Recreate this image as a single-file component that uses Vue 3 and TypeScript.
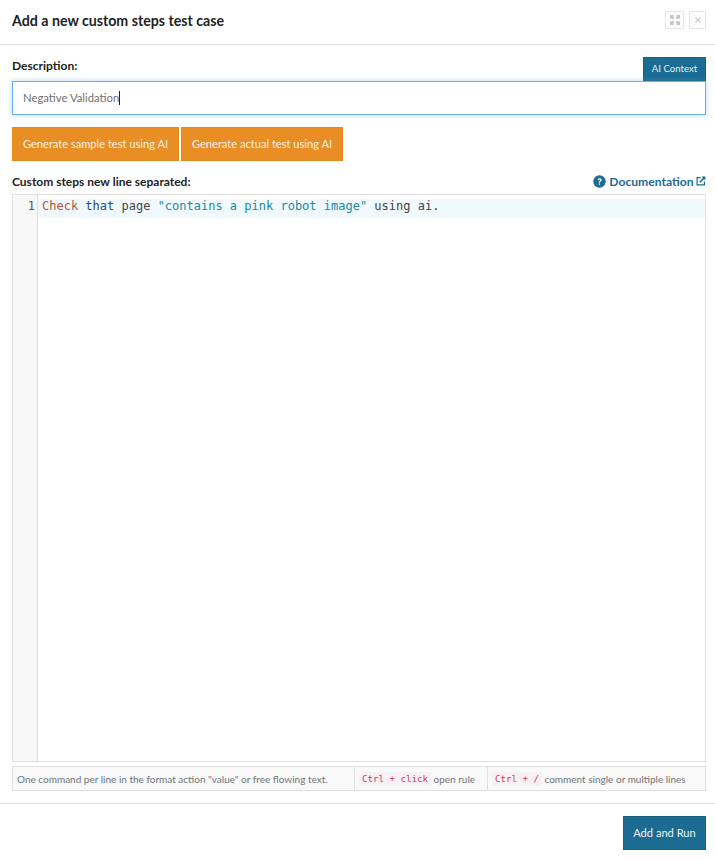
<script setup lang="ts">
const description = 'Negative Validation'
</script>

<template>
  <div class="modal">
    <header class="head">
      <h1 class="title">Add a new custom steps test case</h1>
      <div class="win-btns">
        <button class="win-btn win-expand" aria-label="Expand">
          <svg width="10" height="10" viewBox="0 0 10 10" fill="#c4c4c4">
            <path d="M0 0h4L2.9 1.1 4.4 2.6 2.6 4.4 1.1 2.9 0 4zM10 0v4L8.9 2.9 7.4 4.4 5.6 2.6 7.1 1.1 6 0zM0 10V6l1.1 1.1 1.5-1.5 1.8 1.8-1.5 1.5L4 10zM10 10H6l1.1-1.1-1.5-1.5 1.8-1.8 1.5 1.5L10 6z" />
          </svg>
        </button>
        <button class="win-btn win-close" aria-label="Close">
          <svg width="8" height="8" viewBox="0 0 8 8" stroke="#cfcfcf" stroke-width="1.3" fill="none">
            <path d="M1.5 1.5l5 5M6.5 1.5l-5 5" />
          </svg>
        </button>
      </div>
    </header>

    <main class="body">
      <div class="desc-row">
        <label class="label desc-label">Description:</label>
        <button class="ctx-btn">AI Context</button>
      </div>
      <div class="input">
        <span>{{ description }}</span><i class="caret"></i>
      </div>

      <div class="actions">
        <button class="gen gen-a">Generate sample test using AI</button>
        <button class="gen gen-b">Generate actual test using AI</button>
      </div>

      <div class="steps-row">
        <label class="label">Custom steps new line separated:</label>
        <a class="doc">
          <svg class="q" width="13" height="13" viewBox="0 0 13 13">
            <circle cx="6.5" cy="6.5" r="6.2" fill="#1b6b92" />
            <path d="M4.5 5.1c.1-1.2 1-1.8 2.1-1.8 1.2 0 2 .7 2 1.7 0 1.5-1.7 1.5-1.7 2.7H5.7c0-1.8 1.5-1.8 1.5-2.6 0-.4-.3-.7-.7-.7-.5 0-.8.3-.9.8z" fill="#fff" />
            <rect x="5.7" y="8.4" width="1.3" height="1.4" fill="#fff" />
          </svg>
          <span>Documentation</span>
          <svg class="ext" width="10" height="10" viewBox="0 0 10 10" fill="none" stroke="#1b6b92" stroke-width="1.2">
            <path d="M4.5 1.6H1.1v7.3h7.3V5.5" />
            <path d="M3.8 6.2L8.6 1.4" stroke-width="1.5" />
            <path d="M5.6.6h3.8v3.8z" fill="#1b6b92" stroke="none" />
          </svg>
        </a>
      </div>

      <div class="editor">
        <div class="gutter"><span>1</span></div>
        <div class="code">
          <div class="line"><span class="k-action">Check</span> <span class="k-word">that</span> page <span class="k-str">"contains a pink robot image"</span> using ai.</div>
        </div>
      </div>

      <div class="hints">
        <div class="hint hint-a">One command per line in the format action "value" or free flowing text.</div>
        <div class="hint hint-b"><code>Ctrl + click</code> open rule</div>
        <div class="hint hint-c"><code>Ctrl + /</code> comment single or multiple lines</div>
      </div>
    </main>

    <footer class="foot">
      <button class="run">Add and Run</button>
    </footer>
  </div>
</template>

<style>
html, body { margin: 0; background: #fff; }
</style>

<style scoped>
.modal {
  width: 715px;
  height: 859px;
  display: flex;
  flex-direction: column;
  font-family: Lato, "Liberation Sans", sans-serif;
  color: #222;
  background: #fff;
  box-sizing: border-box;
}
.head {
  height: 44px;
  flex: none;
  display: flex;
  align-items: flex-start;
  justify-content: space-between;
  padding: 0 9px 0 12px;
  border-bottom: 1px solid #e3e3e3;
}
.title {
  margin: 12px 0 0;
  font-size: 14.2px;
  line-height: 18px;
  font-weight: 700;
  color: #222;
}
.win-btns {
  display: flex;
  gap: 5px;
  margin-top: 11px;
}
.win-btn {
  height: 18px;
  padding: 0;
  border: 1px solid #e6e6e6;
  border-radius: 1px;
  background: #fbfbfb;
  display: flex;
  align-items: center;
  justify-content: center;
}
.win-expand { width: 19px; }
.win-close { width: 17px; }
.body {
  flex: none;
  padding: 12px 9px 0 12px;
  display: flex;
  flex-direction: column;
}
.label {
  font-size: 12px;
  line-height: 16px;
  font-weight: 700;
  color: #222;
}
.desc-row {
  display: flex;
  justify-content: space-between;
  align-items: flex-start;
  height: 24px;
}
.desc-label { margin-top: 1px; }
.ctx-btn {
  width: 63px;
  height: 24px;
  padding: 0 0 1px;
  border: 1px solid #176080;
  background: #1b6b92;
  color: #e4eef3;
  font: 400 9.6px/1 Lato, sans-serif;
}
.input {
  height: 34px;
  box-sizing: border-box;
  border: 1px solid #66afe9;
  box-shadow: 0 0 6px rgba(102, 175, 233, 0.45);
  padding: 0 10px 1px;
  display: flex;
  align-items: center;
  font-size: 11.3px;
  color: #707070;
  background: #fff;
}
.caret {
  display: inline-block;
  width: 1px;
  height: 14px;
  background: #222;
}
.actions {
  display: flex;
  gap: 2px;
  margin-top: 12px;
}
.gen {
  height: 34px;
  padding: 0 0 1px;
  border: 1px solid #e08a1e;
  background: #e98d25;
  color: #fdf3e6;
  font: 400 11.1px/1 Lato, sans-serif;
}
.gen-a { width: 167px; }
.gen-b { width: 162px; }
.steps-row {
  display: flex;
  justify-content: space-between;
  align-items: flex-start;
  margin-top: 13px;
  height: 20px;
}
.doc {
  display: flex;
  align-items: center;
  color: #1b6b92;
  font-size: 12.1px;
  line-height: 16px;
  font-weight: 700;
}
.q { margin-right: 3px; margin-top: -1px; }
.ext { margin-left: 2.5px; margin-top: -2px; }
.editor {
  height: 568px;
  box-sizing: border-box;
  border: 1px solid #e0e0e0;
  display: flex;
}
.gutter {
  width: 24px;
  flex: none;
  background: #f8f8f8;
  border-right: 1px solid #dedede;
  font: 12px/15px "DejaVu Sans Mono", monospace;
  color: #555;
  text-align: right;
  padding-top: 4px;
}
.gutter span { margin-right: 2px; }
.code {
  flex: 1;
  padding-top: 4px;
}
.line {
  height: 19px;
  padding: 0 0 0 4px;
  font: 12px/15px "DejaVu Sans Mono", monospace;
  background: #f0f9fe;
  color: #444;
  white-space: pre;
}
.k-action { color: #b5533a; }
.k-word { color: #24506f; }
.k-str { color: #22899a; }
.hints {
  margin-top: 4px;
  height: 25px;
  box-sizing: border-box;
  border: 1px solid #e0e0e0;
  background: #f9f9f9;
  display: flex;
  font-size: 10px;
  color: #6f7478;
}
.hint {
  display: flex;
  align-items: center;
  padding-left: 4px;
  box-sizing: border-box;
  white-space: pre;
}
.hint-a { width: 342px; border-right: 1px solid #e0e0e0; }
.hint-b { width: 133px; border-right: 1px solid #e0e0e0; }
.hint-c { flex: 1; }
code {
  font: 9.15px/14px "DejaVu Sans Mono", monospace;
  color: #d6336c;
  background: #f8f1f4;
  padding: 0 3px;
}
.foot {
  margin-top: 12px;
  border-top: 1px solid #e3e3e3;
  padding: 12px 9px 0 0;
  display: flex;
  justify-content: flex-end;
}
.run {
  width: 83px;
  height: 34px;
  padding: 0 0 1px;
  border: 1px solid #176080;
  background: #1b6b92;
  color: #eaf2f6;
  font: 400 11.1px/1 Lato, sans-serif;
}
</style>
